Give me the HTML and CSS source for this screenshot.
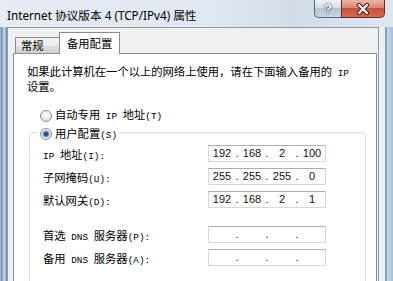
FILE: index.html
```html
<!DOCTYPE html>
<html lang="zh-CN">
<head>
<meta charset="utf-8">
<title>Internet 协议版本 4 (TCP/IPv4) 属性</title>
<link rel="stylesheet" href="styles.css">
</head>
<body>
<div class="window">
  <div class="titlebar">
    <div class="title">Internet 协议版本 4 (TCP/IPv4) 属性</div>
    <div class="caption-buttons">
      <div class="btn help">?</div>
      <div class="btn close">
        <svg width="14" height="12" viewBox="0 0 14 12" aria-hidden="true">
          <path d="M3 2 L11 10 M11 2 L3 10" stroke="#4a1c14" stroke-width="4.2" stroke-linecap="round" fill="none"/>
          <path d="M3 2 L11 10 M11 2 L3 10" stroke="#ffffff" stroke-width="2.2" stroke-linecap="round" fill="none"/>
        </svg>
      </div>
    </div>
  </div>
  <div class="body">
    <div class="frame-left"></div>
    <div class="client">
      <div class="tabs">
        <div class="tab off">常规</div>
        <div class="tab on">备用配置</div>
      </div>
      <div class="panel">
        <p class="intro">如果此计算机在一个以上的网络上使用，请在下面输入备用的<span class="a"> IP</span><br>设置。</p>
        <div class="radio-row opt"><span class="radio"></span><span>自动专用<span class="a"> IP </span>地址<span class="a">(T)</span></span></div>
        <fieldset class="group">
          <legend class="radio-row"><span class="radio checked"></span><span>用户配置<span class="a">(S)</span></span></legend>
          <div class="fields first">
            <label><span class="a">IP </span>地址<span class="a">(I):</span></label>
            <div class="ip"><span>192</span><span>.</span><span>168</span><span>.</span><span>2</span><span>.</span><span>100</span></div>
            <label>子网掩码<span class="a">(U):</span></label>
            <div class="ip"><span>255</span><span>.</span><span>255</span><span>.</span><span>255</span><span>.</span><span>0</span></div>
            <label>默认网关<span class="a">(D):</span></label>
            <div class="ip"><span>192</span><span>.</span><span>168</span><span>.</span><span>2</span><span>.</span><span>1</span></div>
          </div>
          <div class="fields dns">
            <label>首选<span class="a"> DNS </span>服务器<span class="a">(P):</span></label>
            <div class="ip"><span></span><span>.</span><span></span><span>.</span><span></span><span>.</span><span></span></div>
            <label>备用<span class="a"> DNS </span>服务器<span class="a">(A):</span></label>
            <div class="ip"><span></span><span>.</span><span></span><span>.</span><span></span><span>.</span><span></span></div>
          </div>
          <div class="fields wins">
            <span class="spacer"></span>
            <div class="ip"><span></span><span></span><span></span><span></span><span></span><span></span><span></span></div>
          </div>
        </fieldset>
      </div>
    </div>
    <div class="frame-right"></div>
  </div>
</div>
</body>
</html>
```
FILE: styles.css
```css
* { box-sizing: border-box; }
html, body { margin: 0; padding: 0; }
body {
  width: 393px;
  height: 281px;
  overflow: hidden;
  background: #dbe6f2;
  font-family: "Noto Sans CJK SC", sans-serif;
}
.window {
  width: 393px;
  height: 281px;
  display: flex;
  flex-direction: column;
  background: linear-gradient(to right, #e6ecf3, #dfe7f0 55%, #d2dce8 75%, #dde6ef);
}
.titlebar {
  height: 27px;
  flex: none;
  display: flex;
  align-items: flex-start;
  justify-content: space-between;
  padding-right: 8px;
}
.title {
  padding: 7px 0 0 7px;
  font: 11.7px/16px "Noto Sans", "Noto Sans CJK SC", sans-serif;
  color: #000;
  white-space: nowrap;
}
.caption-buttons { display: flex; height: 18px; }
.btn {
  height: 18px;
  display: flex;
  align-items: center;
  justify-content: center;
  border: 1px solid #56657a;
  border-top: none;
}
.help {
  width: 27px;
  border-right: none;
  border-radius: 0 0 0 5px;
  background: linear-gradient(#eef2f7, #d6dee8 45%, #b6c3d3 50%, #c9d5e3);
  color: #fff;
  font: bold 13px/1 "Liberation Sans", sans-serif;
  text-shadow: 0 0 2px #1f2c3d, 0 0 1px #1f2c3d;
}
.close {
  width: 44px;
  border-color: #6b2a20;
  border-radius: 0 0 5px 0;
  background: linear-gradient(#eeb4a6, #db8775 45%, #c94f3b 50%, #d36c53);
}
.body { flex: 1; display: flex; min-height: 0; }
.frame-left {
  width: 7px;
  flex: none;
  background: linear-gradient(to right, #c6d2df, #6f88a8 18%, #a6bfdc 45%, #c3d6ec 65%, #8fa4be 88%, #5f6f85);
}
.client {
  width: 372px;
  flex: none;
  background: #f0f0f0;
  border: 1px solid #8c9aab;
  border-bottom: none;
  padding: 4px 1px 0 5px;
  display: flex;
  flex-direction: column;
}
.frame-right {
  flex: 1;
  background: linear-gradient(to right, #eaf0f6 0, #eaf0f6 6px, #8d9db0 6px, #8d9db0 8px, #c4d8ec 8px, #a6c0dd);
}
.tabs {
  display: flex;
  align-items: flex-end;
  height: 21px;
  padding-left: 2px;
  flex: none;
}
.tab {
  font-size: 11.3px;
  line-height: 15px;
  color: #000;
  border: 1px solid #898c95;
  border-bottom: none;
  white-space: nowrap;
}
.tab.off {
  width: 44px;
  height: 16px;
  padding-left: 5px;
  border-right: none;
  background: linear-gradient(#f3f3f3, #ebebeb 50%, #dedede 50%, #d2d2d2);
}
.tab.on {
  width: 61px;
  height: 22px;
  padding: 3px 7px 0;
  background: #fff;
  margin-bottom: -1px;
  position: relative;
  z-index: 1;
}
.panel {
  flex: 1;
  background: #fff;
  border: 1px solid #898c95;
  border-bottom: none;
  padding-top: 11px;
  font-size: 11.3px;
  color: #000;
}
.a {
  font-family: "Liberation Mono", monospace;
  font-size: 9.4px;
}
.intro {
  margin: 0;
  padding-left: 13px;
  line-height: 12px;
  white-space: nowrap;
}
.radio-row {
  display: flex;
  align-items: center;
  gap: 3px;
  height: 19px;
  line-height: 19px;
  white-space: nowrap;
}
.opt { margin-top: 14px; padding-left: 26px; }
.radio {
  width: 12px;
  height: 12px;
  flex: none;
  border-radius: 50%;
  border: 1px solid #8e8f8f;
  background: radial-gradient(circle at 50% 40%, #ffffff, #e9e9e9 55%, #cfcfcf);
}
.radio.checked {
  background: radial-gradient(circle, #1c3f66 0, #2f6199 2px, #8fb0d3 3px, #e8e8e8 4px, #f6f6f6 6px);
}
.group {
  margin: 0 10px 0 15px;
  padding: 0;
  border: 1px solid #d5dfe5;
  border-radius: 3px;
  min-width: 0;
}
.group legend {
  margin-left: 8px;
  padding: 3px 2px 0;
  height: 15px;
  align-items: center;
}
.fields {
  display: grid;
  grid-template-columns: 165px 118px;
  grid-auto-rows: 17px;
  row-gap: 6px;
  padding-left: 13px;
}
.fields.first { padding-top: 5px; }
.fields.dns { margin-top: 18px; }
.fields.wins { margin-top: 16px; }
.fields label { line-height: 18px; white-space: nowrap; }
.ip {
  display: grid;
  grid-template-columns: 1fr 4px 1fr 4px 1fr 4px 1fr;
  border: 1px solid #d4d8dd;
  border-top-color: #abaeb4;
  background: #fff;
  font: 11px/15px "Liberation Sans", sans-serif;
  color: #111;
  text-align: center;
}
```
